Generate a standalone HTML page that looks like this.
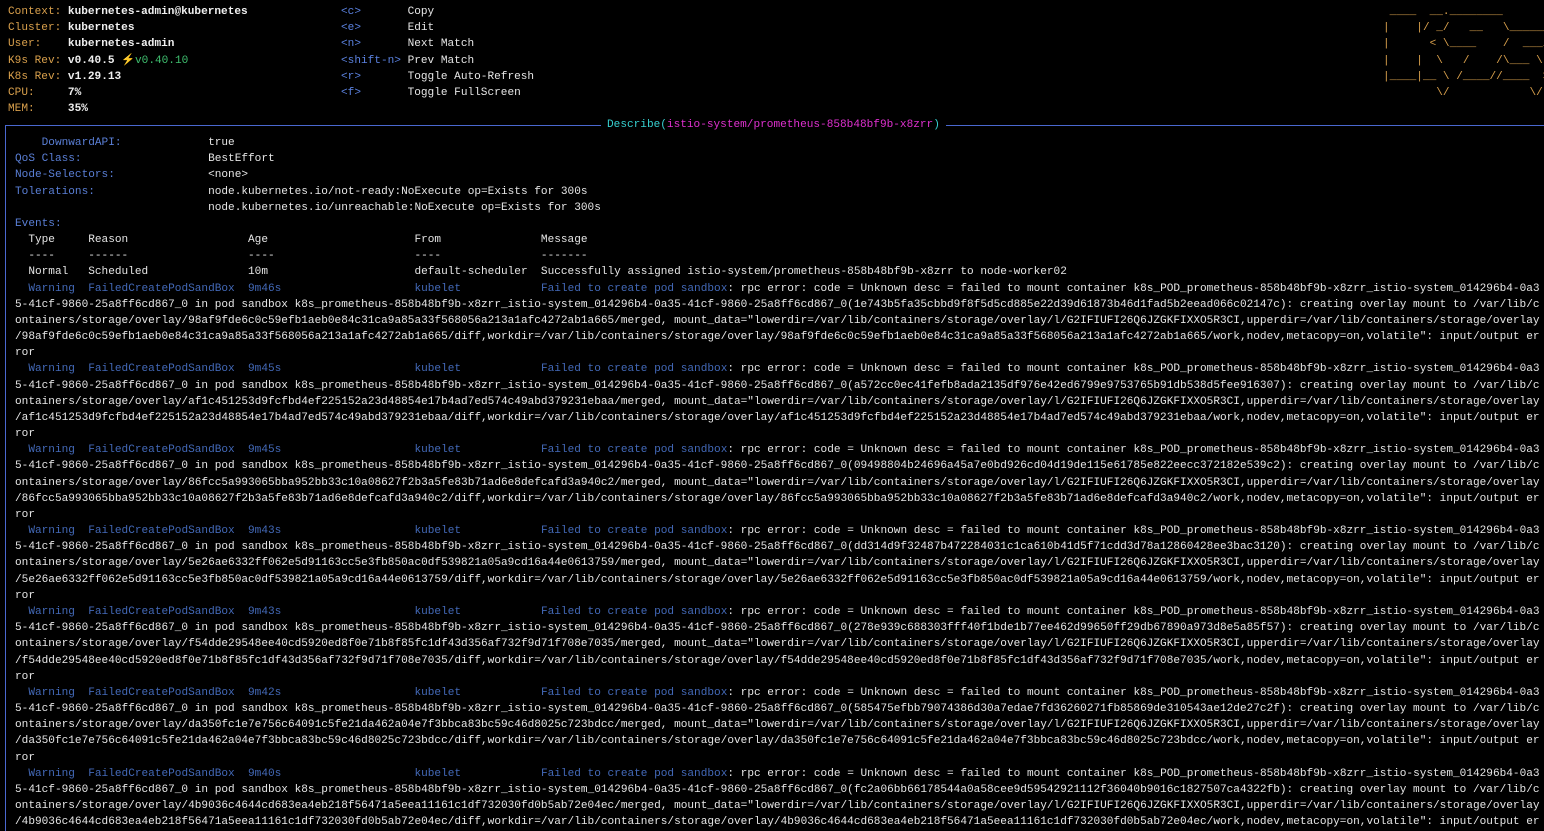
<!DOCTYPE html>
<html><head><meta charset="utf-8"><style>
html,body{margin:0;padding:0;background:#000;width:1544px;height:831px;overflow:hidden}
body{font-family:"Liberation Mono",monospace;font-size:11.1px;line-height:16.17px;color:#e6e6e6;position:relative}
pre{margin:0;font:inherit;white-space:pre}
.ab{position:absolute}
.o{color:#d9a04c}.w{color:#f0f0f0;font-weight:bold}.g{color:#3fbf6f}.y{color:#f0c020}
.b{color:#5b82e0}.k{color:#5a7fd6}.wb{color:#4369b8}
#box{position:absolute;left:5px;top:125px;width:1700px;height:900px;border:1px solid #4a68d0;box-sizing:border-box}
#title{position:absolute;left:601px;top:117px;background:#000;padding:0 6px;color:#36d0d0}
#title .m{color:#e030d0}
#content{position:absolute;left:15px;top:135px;width:1529px;overflow:hidden;height:700px}
.ev{white-space:pre-wrap;word-break:break-all;line-break:anywhere;width:229.8ch}
</style></head><body>
<pre class="ab" style="left:8px;top:4px"><span class="o">Context: </span><span class="w">kubernetes-admin@kubernetes</span>
<span class="o">Cluster: </span><span class="w">kubernetes</span>
<span class="o">User:    </span><span class="w">kubernetes-admin</span>
<span class="o">K9s Rev: </span><span class="w">v0.40.5 </span><span class="y">⚡</span><span class="g">v0.40.10</span>
<span class="o">K8s Rev: </span><span class="w">v1.29.13</span>
<span class="o">CPU:     </span><span class="w">7%</span>
<span class="o">MEM:     </span><span class="w">35%</span></pre>
<pre class="ab" style="left:341px;top:4px"><span class="b">&lt;c&gt;       </span>Copy
<span class="b">&lt;e&gt;       </span>Edit
<span class="b">&lt;n&gt;       </span>Next Match
<span class="b">&lt;shift-n&gt; </span>Prev Match
<span class="b">&lt;r&gt;       </span>Toggle Auto-Refresh
<span class="b">&lt;f&gt;       </span>Toggle FullScreen</pre>
<pre class="ab o" style="left:1383px;top:4px"> ____  __.________       
|    |/ _/   __   \______
|      &lt; \____    /  ___/
|    |  \   /    /\___ \ 
|____|__ \ /____//____  &gt;
        \/            \/ </pre>
<div id="box"></div>
<div id="title">Describe(<span class="m">istio-system/prometheus-858b48bf9b-x8zrr</span>)</div>
<div id="content">
<pre><span class="k">    DownwardAPI:</span>             true
<span class="k">QoS Class:</span>                   BestEffort
<span class="k">Node-Selectors:</span>              &lt;none&gt;
<span class="k">Tolerations:</span>                 node.kubernetes.io/not-ready:NoExecute op=Exists for 300s
                             node.kubernetes.io/unreachable:NoExecute op=Exists for 300s
<span class="k">Events:</span>
  Type     Reason                  Age                      From               Message
  ----     ------                  ----                     ----               -------
  Normal   Scheduled               10m                      default-scheduler  Successfully assigned istio-system/prometheus-858b48bf9b-x8zrr to node-worker02</pre>
<div class="ev"><span class="wb">  Warning  FailedCreatePodSandBox  9m46s                    kubelet            Failed to create pod sandbox</span>: rpc error: code = Unknown desc = failed to mount container k8s_POD_prometheus-858b48bf9b-x8zrr_istio-system_014296b4-0a35-41cf-9860-25a8ff6cd867_0 in pod sandbox k8s_prometheus-858b48bf9b-x8zrr_istio-system_014296b4-0a35-41cf-9860-25a8ff6cd867_0(1e743b5fa35cbbd9f8f5d5cd885e22d39d61873b46d1fad5b2eead066c02147c): creating overlay mount to /var/lib/containers/storage/overlay/98af9fde6c0c59efb1aeb0e84c31ca9a85a33f568056a213a1afc4272ab1a665/merged, mount_data="lowerdir=/var/lib/containers/storage/overlay/l/G2IFIUFI26Q6JZGKFIXXO5R3CI,upperdir=/var/lib/containers/storage/overlay/98af9fde6c0c59efb1aeb0e84c31ca9a85a33f568056a213a1afc4272ab1a665/diff,workdir=/var/lib/containers/storage/overlay/98af9fde6c0c59efb1aeb0e84c31ca9a85a33f568056a213a1afc4272ab1a665/work,nodev,metacopy=on,volatile": input/output error</div>
<div class="ev"><span class="wb">  Warning  FailedCreatePodSandBox  9m45s                    kubelet            Failed to create pod sandbox</span>: rpc error: code = Unknown desc = failed to mount container k8s_POD_prometheus-858b48bf9b-x8zrr_istio-system_014296b4-0a35-41cf-9860-25a8ff6cd867_0 in pod sandbox k8s_prometheus-858b48bf9b-x8zrr_istio-system_014296b4-0a35-41cf-9860-25a8ff6cd867_0(a572cc0ec41fefb8ada2135df976e42ed6799e9753765b91db538d5fee916307): creating overlay mount to /var/lib/containers/storage/overlay/af1c451253d9fcfbd4ef225152a23d48854e17b4ad7ed574c49abd379231ebaa/merged, mount_data="lowerdir=/var/lib/containers/storage/overlay/l/G2IFIUFI26Q6JZGKFIXXO5R3CI,upperdir=/var/lib/containers/storage/overlay/af1c451253d9fcfbd4ef225152a23d48854e17b4ad7ed574c49abd379231ebaa/diff,workdir=/var/lib/containers/storage/overlay/af1c451253d9fcfbd4ef225152a23d48854e17b4ad7ed574c49abd379231ebaa/work,nodev,metacopy=on,volatile": input/output error</div>
<div class="ev"><span class="wb">  Warning  FailedCreatePodSandBox  9m45s                    kubelet            Failed to create pod sandbox</span>: rpc error: code = Unknown desc = failed to mount container k8s_POD_prometheus-858b48bf9b-x8zrr_istio-system_014296b4-0a35-41cf-9860-25a8ff6cd867_0 in pod sandbox k8s_prometheus-858b48bf9b-x8zrr_istio-system_014296b4-0a35-41cf-9860-25a8ff6cd867_0(09498804b24696a45a7e0bd926cd04d19de115e61785e822eecc372182e539c2): creating overlay mount to /var/lib/containers/storage/overlay/86fcc5a993065bba952bb33c10a08627f2b3a5fe83b71ad6e8defcafd3a940c2/merged, mount_data="lowerdir=/var/lib/containers/storage/overlay/l/G2IFIUFI26Q6JZGKFIXXO5R3CI,upperdir=/var/lib/containers/storage/overlay/86fcc5a993065bba952bb33c10a08627f2b3a5fe83b71ad6e8defcafd3a940c2/diff,workdir=/var/lib/containers/storage/overlay/86fcc5a993065bba952bb33c10a08627f2b3a5fe83b71ad6e8defcafd3a940c2/work,nodev,metacopy=on,volatile": input/output error</div>
<div class="ev"><span class="wb">  Warning  FailedCreatePodSandBox  9m43s                    kubelet            Failed to create pod sandbox</span>: rpc error: code = Unknown desc = failed to mount container k8s_POD_prometheus-858b48bf9b-x8zrr_istio-system_014296b4-0a35-41cf-9860-25a8ff6cd867_0 in pod sandbox k8s_prometheus-858b48bf9b-x8zrr_istio-system_014296b4-0a35-41cf-9860-25a8ff6cd867_0(dd314d9f32487b472284031c1ca610b41d5f71cdd3d78a12860428ee3bac3120): creating overlay mount to /var/lib/containers/storage/overlay/5e26ae6332ff062e5d91163cc5e3fb850ac0df539821a05a9cd16a44e0613759/merged, mount_data="lowerdir=/var/lib/containers/storage/overlay/l/G2IFIUFI26Q6JZGKFIXXO5R3CI,upperdir=/var/lib/containers/storage/overlay/5e26ae6332ff062e5d91163cc5e3fb850ac0df539821a05a9cd16a44e0613759/diff,workdir=/var/lib/containers/storage/overlay/5e26ae6332ff062e5d91163cc5e3fb850ac0df539821a05a9cd16a44e0613759/work,nodev,metacopy=on,volatile": input/output error</div>
<div class="ev"><span class="wb">  Warning  FailedCreatePodSandBox  9m43s                    kubelet            Failed to create pod sandbox</span>: rpc error: code = Unknown desc = failed to mount container k8s_POD_prometheus-858b48bf9b-x8zrr_istio-system_014296b4-0a35-41cf-9860-25a8ff6cd867_0 in pod sandbox k8s_prometheus-858b48bf9b-x8zrr_istio-system_014296b4-0a35-41cf-9860-25a8ff6cd867_0(278e939c688303fff40f1bde1b77ee462d99650ff29db67890a973d8e5a85f57): creating overlay mount to /var/lib/containers/storage/overlay/f54dde29548ee40cd5920ed8f0e71b8f85fc1df43d356af732f9d71f708e7035/merged, mount_data="lowerdir=/var/lib/containers/storage/overlay/l/G2IFIUFI26Q6JZGKFIXXO5R3CI,upperdir=/var/lib/containers/storage/overlay/f54dde29548ee40cd5920ed8f0e71b8f85fc1df43d356af732f9d71f708e7035/diff,workdir=/var/lib/containers/storage/overlay/f54dde29548ee40cd5920ed8f0e71b8f85fc1df43d356af732f9d71f708e7035/work,nodev,metacopy=on,volatile": input/output error</div>
<div class="ev"><span class="wb">  Warning  FailedCreatePodSandBox  9m42s                    kubelet            Failed to create pod sandbox</span>: rpc error: code = Unknown desc = failed to mount container k8s_POD_prometheus-858b48bf9b-x8zrr_istio-system_014296b4-0a35-41cf-9860-25a8ff6cd867_0 in pod sandbox k8s_prometheus-858b48bf9b-x8zrr_istio-system_014296b4-0a35-41cf-9860-25a8ff6cd867_0(585475efbb79074386d30a7edae7fd36260271fb85869de310543ae12de27c2f): creating overlay mount to /var/lib/containers/storage/overlay/da350fc1e7e756c64091c5fe21da462a04e7f3bbca83bc59c46d8025c723bdcc/merged, mount_data="lowerdir=/var/lib/containers/storage/overlay/l/G2IFIUFI26Q6JZGKFIXXO5R3CI,upperdir=/var/lib/containers/storage/overlay/da350fc1e7e756c64091c5fe21da462a04e7f3bbca83bc59c46d8025c723bdcc/diff,workdir=/var/lib/containers/storage/overlay/da350fc1e7e756c64091c5fe21da462a04e7f3bbca83bc59c46d8025c723bdcc/work,nodev,metacopy=on,volatile": input/output error</div>
<div class="ev"><span class="wb">  Warning  FailedCreatePodSandBox  9m40s                    kubelet            Failed to create pod sandbox</span>: rpc error: code = Unknown desc = failed to mount container k8s_POD_prometheus-858b48bf9b-x8zrr_istio-system_014296b4-0a35-41cf-9860-25a8ff6cd867_0 in pod sandbox k8s_prometheus-858b48bf9b-x8zrr_istio-system_014296b4-0a35-41cf-9860-25a8ff6cd867_0(fc2a06bb66178544a0a58cee9d59542921112f36040b9016c1827507ca4322fb): creating overlay mount to /var/lib/containers/storage/overlay/4b9036c4644cd683ea4eb218f56471a5eea11161c1df732030fd0b5ab72e04ec/merged, mount_data="lowerdir=/var/lib/containers/storage/overlay/l/G2IFIUFI26Q6JZGKFIXXO5R3CI,upperdir=/var/lib/containers/storage/overlay/4b9036c4644cd683ea4eb218f56471a5eea11161c1df732030fd0b5ab72e04ec/diff,workdir=/var/lib/containers/storage/overlay/4b9036c4644cd683ea4eb218f56471a5eea11161c1df732030fd0b5ab72e04ec/work,nodev,metacopy=on,volatile": input/output error</div>
</div>
</body></html>
